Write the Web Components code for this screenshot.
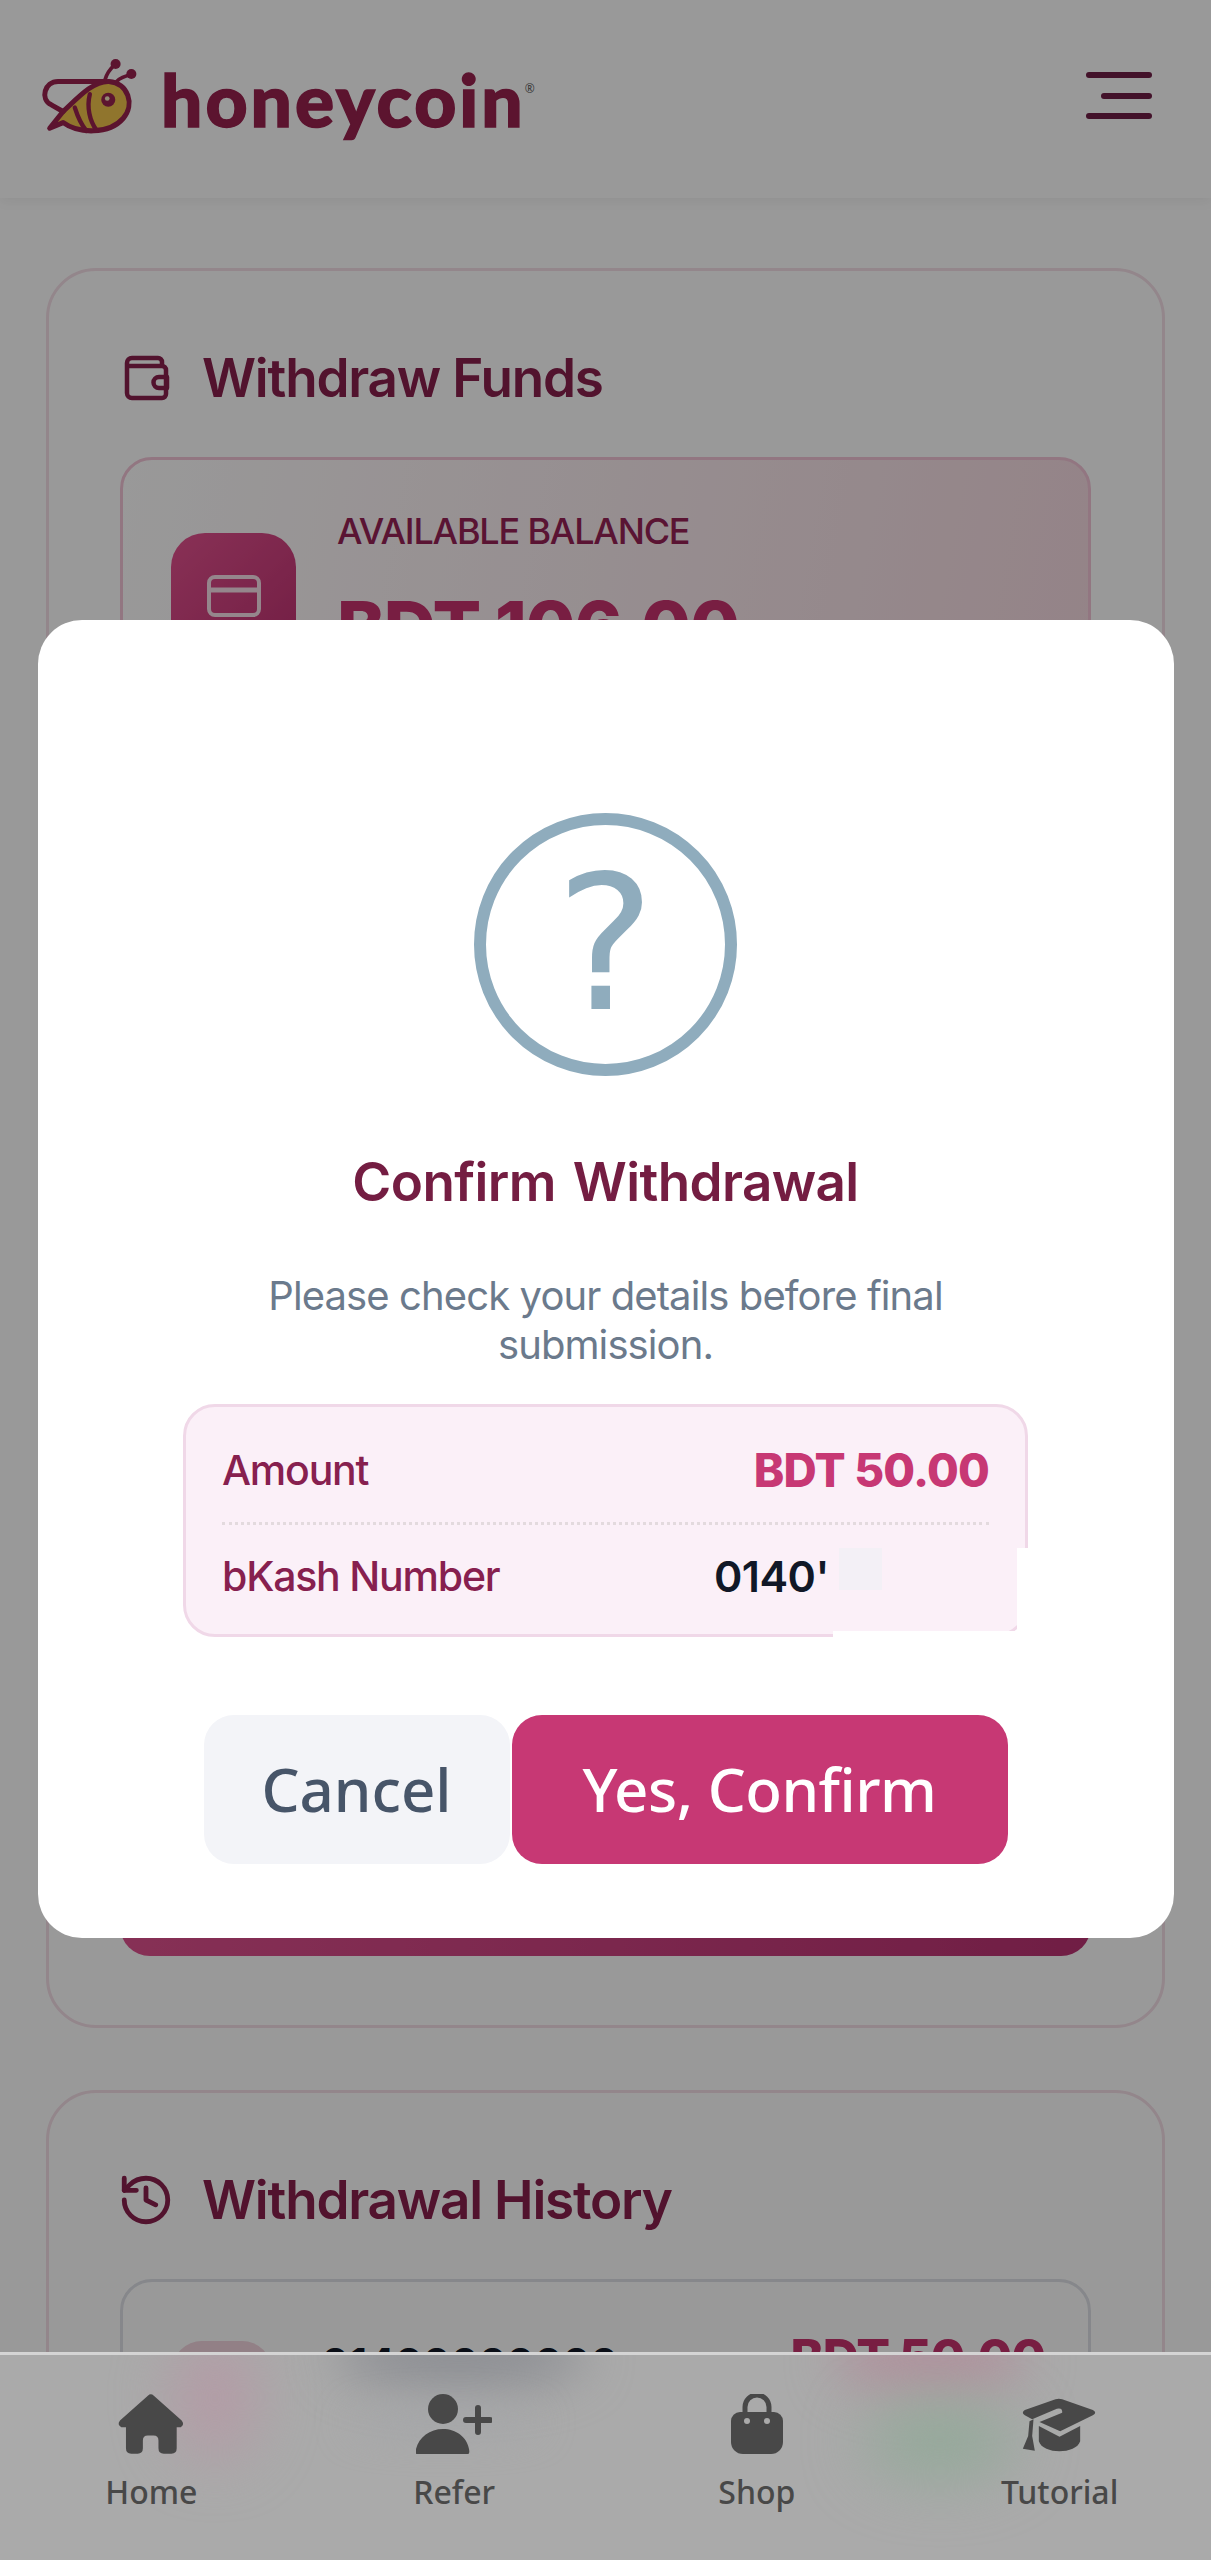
<!doctype html>
<html>
<head>
<meta charset="utf-8">
<title>honeycoin</title>
<style>
  html, body { margin: 0; background: #fff; }
  body { font-family: Inter, "Noto Sans", sans-serif; }
</style>
</head>
<body>
<hc-app>
  <hc-header></hc-header>
  <hc-main>
    <hc-card heading="Withdraw Funds" icon="wallet">
      <hc-balance label="AVAILABLE BALANCE" amount="BDT 106.00"></hc-balance>
      <div style="height:1139px"></div>
      <hc-submit></hc-submit>
    </hc-card>
    <hc-card heading="Withdrawal History" icon="history">
      <hc-history number="01400000000" amount="BDT 50.00"></hc-history>
    </hc-card>
  </hc-main>
  <hc-modal heading="Confirm Withdrawal" text="Please check your details before final submission.">
    <hc-detail label="Amount" value="BDT 50.00" kind="amount"></hc-detail>
    <hc-detail label="bKash Number" value="0140'" kind="number"></hc-detail>
  </hc-modal>
  <hc-nav>
    <hc-nav-item label="Home" icon="home"></hc-nav-item>
    <hc-nav-item label="Refer" icon="refer"></hc-nav-item>
    <hc-nav-item label="Shop" icon="shop"></hc-nav-item>
    <hc-nav-item label="Tutorial" icon="tutorial"></hc-nav-item>
  </hc-nav>
</hc-app>

<script>
const ICONS = {
  wallet: `<svg viewBox="0 0 46 46" width="46" height="46" fill="none" stroke="currentColor" stroke-width="4.5" stroke-linejoin="round" stroke-linecap="round">
    <path d="M38 11V7a4 4 0 0 0-4-4H8a5 5 0 0 0-5 5v30a5 5 0 0 0 5 5h30a4 4 0 0 0 4-4V15a4 4 0 0 0-4-4H3"/>
    <path d="M43 22H35a5 5 0 0 0 0 11h8z"/></svg>`,
  history: `<svg viewBox="0 0 24 24" width="58" height="58" fill="none" stroke="currentColor" stroke-width="2" stroke-linejoin="round" stroke-linecap="round" style="margin-left:-7px">
    <path d="M3 12a9 9 0 1 0 9-9 9.75 9.75 0 0 0-6.74 2.74L3 8"/><path d="M3 3v5h5"/><path d="M12 7v5l4 2"/></svg>`,
  home: `<svg viewBox="105 155 205 187" width="70" height="62" fill="currentColor">
    <path d="M198 163Q207 155 216 163L300 238Q310 250 297 258L285 258V322Q285 338 269 338H246Q230 338 230 322V298Q230 283 215 283H198Q183 283 183 298V322Q183 338 167 338H148Q132 338 132 322V258L118 258Q104 250 114 238Z"/></svg>`,
  refer: `<svg viewBox="0 0 76 60" width="76" height="60" fill="currentColor">
    <circle cx="27" cy="15" r="15"/>
    <path d="M1 60Q-1 60 0 55C3 43 14 35 27 35S51 43 53 55Q54 60 52 60Z"/>
    <path d="M50 26H74M62 14V38" stroke="currentColor" stroke-width="6" stroke-linecap="round" fill="none"/></svg>`,
  shop: `<svg viewBox="0 0 52 60" width="52" height="60">
    <path d="M14 22V13a12 12 0 0 1 24 0V22" fill="none" stroke="currentColor" stroke-width="5"/>
    <path d="M9 18H43A9 9 0 0 1 52 27V48A12 12 0 0 1 40 60H12A12 12 0 0 1 0 48V27A9 9 0 0 1 9 18Z" fill="currentColor"/>
    <circle cx="16" cy="27" r="3" fill="#aaa"/><circle cx="36" cy="27" r="3" fill="#aaa"/></svg>`,
  tutorial: `<svg viewBox="1075 165 230 165" width="79" height="55" fill="currentColor">
    <path d="M1178 172Q1188 168 1198 172L1290 204Q1304 212 1290 220L1192 268L1130 240L1198 212Q1200 196 1182 200L1108 232L1086 220Q1074 212 1086 204Z"/>
    <path d="M1128 252L1190 284L1252 252V298C1240 338 1140 338 1128 298Z"/>
    <path d="M1100 238L1112 232L1108 282L1116 326L1080 320L1096 282Z"/></svg>`
};

class HcApp extends HTMLElement {
  constructor() {
    super();
    this.attachShadow({ mode: "open" });
  }
  connectedCallback() {
    this.shadowRoot.innerHTML = `
    <style>
      :host { display: block; position: relative; width: 100%; height: 2560px; overflow: hidden; background: #fff; }
    </style>
    <slot></slot>`;
  }
}

class HcHeader extends HTMLElement {
  constructor() {
    super();
    this.attachShadow({ mode: "open" });
  }
  connectedCallback() {
    this.shadowRoot.innerHTML = `
    <style>
      :host { display: flex; align-items: flex-start; justify-content: space-between; height: 198px; box-sizing: border-box; padding: 58px 59px 0 38px; background: #fff; box-shadow: 0 3px 12px rgba(0,0,0,.06); }
      .logo { display: flex; align-items: flex-start; gap: 21px; }
      .name { font: 900 73px/1 Lato, sans-serif; letter-spacing: 3px; -webkit-text-stroke: 1.5px #99224f; margin-top: 5px; color: #99224f; }
      sup { font: 400 12px/1 "Noto Sans", sans-serif; letter-spacing: 0; -webkit-text-stroke: 0; vertical-align: top; position: relative; top: 20px; left: -1px; color: #666; }
      .menu { display: flex; flex-direction: column; align-items: flex-end; gap: 14.5px; width: 66px; margin-top: 14px; }
      .menu i { display: block; width: 100%; height: 6px; border-radius: 3px; background: #701e46; }
      .menu i:nth-child(2) { width: 51px; }
    </style>
    <div class="logo">
      <svg viewBox="55 52 295 242" width="102" height="81" fill="none" stroke="#99224f" stroke-width="15" stroke-linejoin="round" stroke-linecap="round">
        <path d="M125 245C170 278 262 282 305 232C340 190 320 128 262 122C215 120 170 170 125 212L85 262Z" fill="#f0c44c"/>
        <path d="M245 122H110C70 122 55 175 90 192L125 212"/>
        <path d="M160 200C168 225 178 250 195 270M205 160C195 200 205 240 225 268" stroke-width="13"/>
        <path d="M250 118C255 100 265 85 280 72M285 122C295 112 312 105 328 102" stroke-width="11"/>
        <circle cx="282" cy="70" r="15" fill="#99224f" stroke="none"/>
        <circle cx="329" cy="100" r="15" fill="#99224f" stroke="none"/>
        <circle cx="260" cy="177" r="21" fill="#99224f" stroke="none"/>
        <circle cx="257" cy="173" r="7" fill="#f4e9c0" stroke="none"/>
      </svg>
      <div class="name">honeycoin<sup>®</sup></div>
    </div>
    <div class="menu"><i></i><i></i><i></i></div>`;
  }
}

class HcMain extends HTMLElement {
  constructor() {
    super();
    this.attachShadow({ mode: "open" });
  }
  connectedCallback() {
    this.shadowRoot.innerHTML = `
    <style>
      :host { display: flex; flex-direction: column; gap: 62px; padding: 70px 46px 0; }
    </style>
    <slot></slot>`;
  }
}

class HcCard extends HTMLElement {
  constructor() {
    super();
    this.attachShadow({ mode: "open" });
  }
  connectedCallback() {
    this.shadowRoot.innerHTML = `
    <style>
      :host { display: block; box-sizing: border-box; border: 3px solid #f5dfe8; border-radius: 50px; padding: 71px 71px 69px; background: #fff; color: #89204d; }
      h2 { display: flex; align-items: center; height: 72px; margin: 0 0 43px; padding-left: 4px; font: 600 53px/72px Inter, sans-serif; letter-spacing: -1.2px; }
      .ic { flex: none; width: 78px; display: flex; }
      svg { display: block; flex: none; }
    </style>
    <h2><span class="ic">${ICONS[this.getAttribute("icon")]}</span><span>${this.getAttribute("heading")}</span></h2>
    <slot></slot>`;
  }
}

class HcBalance extends HTMLElement {
  constructor() {
    super();
    this.attachShadow({ mode: "open" });
  }
  connectedCallback() {
    this.shadowRoot.innerHTML = `
    <style>
      :host { display: flex; gap: 41px; height: 260px; box-sizing: border-box; border: 3px solid #f3c5d8; border-radius: 32px; padding: 73px 48px 0; background: linear-gradient(100deg, #fff 0%, #f7dbe2 100%); }
      .badge { display: flex; justify-content: center; padding-top: 42px; box-sizing: border-box; flex: none; width: 125px; height: 125px; border-radius: 34px; background: linear-gradient(135deg, #e4528f, #bf3272); }
      .badge svg { display: block; }
      .label { font: 500 36px/1 Inter, sans-serif; letter-spacing: -1.2px; color: #962255; margin-top: -20px; }
      .amount { font: 800 72px/1 Inter, sans-serif; letter-spacing: -1px; color: #c9326f; margin-top: 42px; }
    </style>
    <div class="badge">
      <svg viewBox="0 0 54 42" width="54" height="42" fill="none" stroke="#f8e0ea" stroke-width="4">
        <rect x="2" y="2" width="50" height="38" rx="6"/><path d="M2 15H52" stroke-width="5"/>
      </svg>
    </div>
    <div>
      <div class="label">${this.getAttribute("label")}</div>
      <div class="amount">${this.getAttribute("amount")}</div>
    </div>`;
  }
}

class HcSubmit extends HTMLElement {
  constructor() {
    super();
    this.attachShadow({ mode: "open" });
  }
  connectedCallback() {
    this.shadowRoot.innerHTML = `
    <style>
      :host { display: block; height: 100px; border-radius: 30px; background: linear-gradient(90deg, #e0518f, #bb3273); }
    </style>`;
  }
}

class HcHistory extends HTMLElement {
  constructor() {
    super();
    this.attachShadow({ mode: "open" });
  }
  connectedCallback() {
    this.shadowRoot.innerHTML = `
    <style>
      :host { display: flex; gap: 49px; height: 300px; box-sizing: border-box; border: 3px solid #dfe2e8; border-radius: 32px; padding: 59px 43px 0 49px; }
      .dot { flex: none; width: 100px; height: 110px; border-radius: 30px; background: #f3d5df; }
      .info { flex: 1; padding-top: 2px; }
      .num { font: 700 42px/1 Inter, sans-serif; color: #111827; letter-spacing: -.4px; }
      .amt { font: 800 50px/1 Inter, sans-serif; color: #c9326f; letter-spacing: -1px; margin-top: -9px; }
    </style>
    <div class="dot"></div>
    <div class="info"><div class="num">${this.getAttribute("number")}</div></div>
    <div class="amt">${this.getAttribute("amount")}</div>`;
  }
}

class HcDetail extends HTMLElement {
  constructor() {
    super();
    this.attachShadow({ mode: "open" });
  }
  connectedCallback() {
    this.shadowRoot.innerHTML = `
    <style>
      :host { display: flex; align-items: center; justify-content: space-between; height: 103px; color: #87204f; font: 500 41px/1 Inter, sans-serif; letter-spacing: -1.2px; }
      :host([kind=amount]) { border-bottom: 3px dotted #e3dade; }
      :host([kind=amount]) .value { font: 800 46px/1 Inter, sans-serif; letter-spacing: -.8px; color: #c73874; }
      :host([kind=number]) .value { font: 600 43px/1 Inter, sans-serif; letter-spacing: -.5px; color: #111827; margin-right: 160px; }
    </style>
    <span>${this.getAttribute("label")}</span>
    <span class="value">${this.getAttribute("value")}</span>`;
  }
}

class HcModal extends HTMLElement {
  constructor() {
    super();
    this.attachShadow({ mode: "open" });
  }
  connectedCallback() {
    this.shadowRoot.innerHTML = `
    <style>
      :host { position: absolute; inset: 0; z-index: 5; display: flex; align-items: center; justify-content: center; box-sizing: border-box; padding-bottom: 3px; background: rgba(0,0,0,.4); }
      .dialog { display: flex; flex-direction: column; align-items: center; box-sizing: border-box; width: 1136px; height: 1318px; padding-top: 193px; border-radius: 44px; background: #fff; text-align: center; }
      .mark { display: flex; align-items: center; justify-content: center; box-sizing: border-box; width: 263px; height: 263px; border: 12px solid #8facbd; border-radius: 50%; color: #8facbd; font: 400 187px/1 "DejaVu Sans", sans-serif; }
      h2 { margin: 71px 0 0; font: 600 53px/70px Inter, sans-serif; letter-spacing: -.6px; word-spacing: 4px; color: #741d42; }
      p { width: 720px; margin: 54px 0 0; font: 400 40px/49px Inter, sans-serif; letter-spacing: -.9px; color: #6b7a8c; }
      .box { position: relative; box-sizing: border-box; width: 845px; height: 233px; margin-top: 35px; padding: 12px 36px 0; border: 3px solid #f0d8e8; border-radius: 32px; background: #fbf0f8; text-align: left; }
      .cover { position: absolute; background: #fff; }
      .smudge { position: absolute; left: 653px; top: 141px; width: 43px; height: 42px; background: #f3f0f6; }
      .actions { display: flex; gap: 2px; margin-top: 78px; }
      .btn { display: flex; align-items: center; justify-content: center; height: 149px; border-radius: 30px; font: 500 60px/1 "Noto Sans", sans-serif; }
      .cancel { width: 306px; background: #f3f4f8; color: #475569; }
      .confirm { width: 496px; background: #c73874; color: #fff; letter-spacing: -.5px; }
    </style>
    <div class="dialog">
      <div class="mark">?</div>
      <h2>${this.getAttribute("heading")}</h2>
      <p>${this.getAttribute("text")}</p>
      <div class="box">
        <slot></slot>
        <div class="smudge"></div>
        <div class="cover" style="right:-6px;top:141px;width:14px;height:96px"></div>
        <div class="cover" style="left:647px;right:-6px;bottom:-6px;height:9px"></div>
      </div>
      <div class="actions">
        <div class="btn cancel">Cancel</div>
        <div class="btn confirm">Yes, Confirm</div>
      </div>
    </div>`;
  }
}

// frosted bar: the blurred page behind it is painted as soft blobs, backdrop-filter leaves the text sharp at the top edge
class HcNav extends HTMLElement {
  constructor() {
    super();
    this.attachShadow({ mode: "open" });
  }
  connectedCallback() {
    this.shadowRoot.innerHTML = `
    <style>
      :host { position: absolute; left: 0; right: 0; bottom: 0; z-index: 10; box-sizing: border-box; height: 208px; border-top: 3px solid #d4d4d4; background: #aaa; overflow: hidden; }
      .frost { position: absolute; inset: 0; }
      .frost i { position: absolute; display: block; border-radius: 50%; }
      .items { position: relative; display: grid; grid-template-columns: repeat(4, 1fr); padding-top: 38px; }
    </style>
    <div class="frost">
      <i style="left:172px;top:-20px;width:86px;height:125px;background:#b39ca6;filter:blur(28px)"></i>
      <i style="left:335px;top:-30px;width:250px;height:62px;background:#8c8e93;filter:blur(24px)"></i>
      <i style="left:350px;top:55px;width:190px;height:24px;background:#a4a6a9;filter:blur(18px)"></i>
      <i style="left:835px;top:-30px;width:190px;height:70px;background:#b0939e;filter:blur(24px)"></i>
      <i style="left:865px;top:48px;width:150px;height:75px;background:#93a999;filter:blur(30px)"></i>
    </div>
    <div class="items"><slot></slot></div>`;
  }
}

class HcNavItem extends HTMLElement {
  constructor() {
    super();
    this.attachShadow({ mode: "open" });
  }
  connectedCallback() {
    this.shadowRoot.innerHTML = `
    <style>
      :host { display: flex; flex-direction: column; align-items: center; color: #484848; font: 500 32px/1 "Noto Sans", sans-serif; }
      .icon { display: flex; align-items: center; justify-content: center; height: 62px; }
      svg { display: block; }
      span { margin-top: 21px; }
    </style>
    <div class="icon">${ICONS[this.getAttribute("icon")]}</div>
    <span>${this.getAttribute("label")}</span>`;
  }
}

customElements.define("hc-app", HcApp);
customElements.define("hc-header", HcHeader);
customElements.define("hc-main", HcMain);
customElements.define("hc-card", HcCard);
customElements.define("hc-balance", HcBalance);
customElements.define("hc-submit", HcSubmit);
customElements.define("hc-history", HcHistory);
customElements.define("hc-detail", HcDetail);
customElements.define("hc-modal", HcModal);
customElements.define("hc-nav", HcNav);
customElements.define("hc-nav-item", HcNavItem);
</script>
</body>
</html>
